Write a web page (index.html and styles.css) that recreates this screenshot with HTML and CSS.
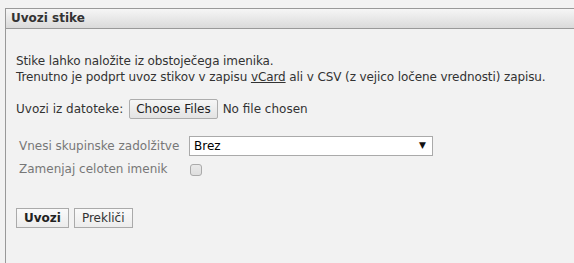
FILE: index.html
```html
<!DOCTYPE html>
<html lang="sl">
  <head>
    <meta charset="UTF-8" />
    <title>Uvozi stike</title>
    <link rel="stylesheet" href="styles.css">
  </head>
  <body>
    <div class="dialog">
      <div class="dialog-title">Uvozi stike</div>
      <form class="dialog-body" id="importForm">
        <p class="hint">
          Stike lahko naložite iz obstoječega imenika.<br />
          Trenutno je podprt uvoz stikov v zapisu <a href="#">vCard</a> ali v CSV (z vejico ločene vrednosti) zapisu.
        </p>

        <div class="file-row">
          <label for="file">Uvozi iz datoteke:</label>
          <input type="file" id="file" name="file" multiple />
        </div>

        <table class="options">
          <tr>
            <td class="opt-label"><label for="group">Vnesi skupinske zadolžitve</label></td>
            <td>
              <div class="select-wrap">
                <select id="group" name="group">
                  <option>Brez</option>
                </select>
                <span class="select-arrow">&#9660;</span>
              </div>
            </td>
          </tr>
          <tr>
            <td class="opt-label"><label for="replace">Zamenjaj celoten imenik</label></td>
            <td><input type="checkbox" id="replace" name="replace" /></td>
          </tr>
        </table>

        <div class="actions">
          <button type="submit" class="btn btn-main">Uvozi</button>
          <button type="button" class="btn">Prekliči</button>
        </div>
      </form>
    </div>
  </body>
</html>
```

FILE: styles.css
```css
body {
  font-family: "DejaVu Sans", "Liberation Sans", sans-serif;
  font-size: 12px;
  color: #333;
  margin: 0;
  padding: 0;
  background-color: #f2f2f2;
}

.dialog {
  margin: 8px 0 0 5px;
  border-left: 1px solid #999;
  border-top: 1px solid #999;
  height: 254px;
}

.dialog-title {
  height: 19px;
  line-height: 19px;
  padding-left: 5px;
  font-weight: bold;
  color: #333;
  background: linear-gradient(#f6f6f6, #dadada);
  border-bottom: 1px solid #999;
}

.dialog-body {
  padding: 24px 0 0 10px;
}

.hint {
  margin: 0;
  line-height: 16px;
  letter-spacing: -0.1px;
}

.hint a {
  color: #333;
  text-decoration: underline;
}

.file-row {
  display: flex;
  align-items: center;
  gap: 6px;
  margin-top: 14px;
}

input[type="file"] {
  font: inherit;
  color: #333;
}

input[type="file"]::file-selector-button {
  font: inherit;
  color: #222;
  height: 20px;
  padding: 0 6px;
  margin-right: 5px;
  border: 1px solid #adadad;
  border-radius: 2px;
  background: linear-gradient(#f6f6f6, #e3e3e3);
}

.options {
  border-collapse: collapse;
  margin-top: 15px;
}

.options td {
  padding: 1px 3px;
  height: 21px;
}

.opt-label {
  width: 164px;
  color: #777;
}

.select-wrap {
  position: relative;
  width: 244px;
}

select {
  appearance: none;
  display: block;
  width: 100%;
  height: 20px;
  padding: 0 4px;
  font: inherit;
  color: #000;
  background: #fff;
  border: 1px solid #aaa;
  border-radius: 0;
}

.select-arrow {
  position: absolute;
  right: 7px;
  top: 4px;
  font-size: 9px;
  color: #111;
  pointer-events: none;
}

input[type="checkbox"] {
  appearance: none;
  width: 12px;
  height: 12px;
  margin: 2px 0 0 1px;
  border: 1px solid #aaa;
  border-radius: 3px;
  background: linear-gradient(#e9e9e9, #dedede);
  display: block;
}

.actions {
  display: flex;
  gap: 5px;
  margin-top: 28px;
}

.btn {
  font: inherit;
  color: #333;
  height: 20px;
  padding: 0 7px;
  background: linear-gradient(#fafafa, #ececec);
  border: 1px solid #aaa;
  border-radius: 0;
  cursor: pointer;
}

.btn-main {
  font-weight: bold;
  color: #222;
}
```
